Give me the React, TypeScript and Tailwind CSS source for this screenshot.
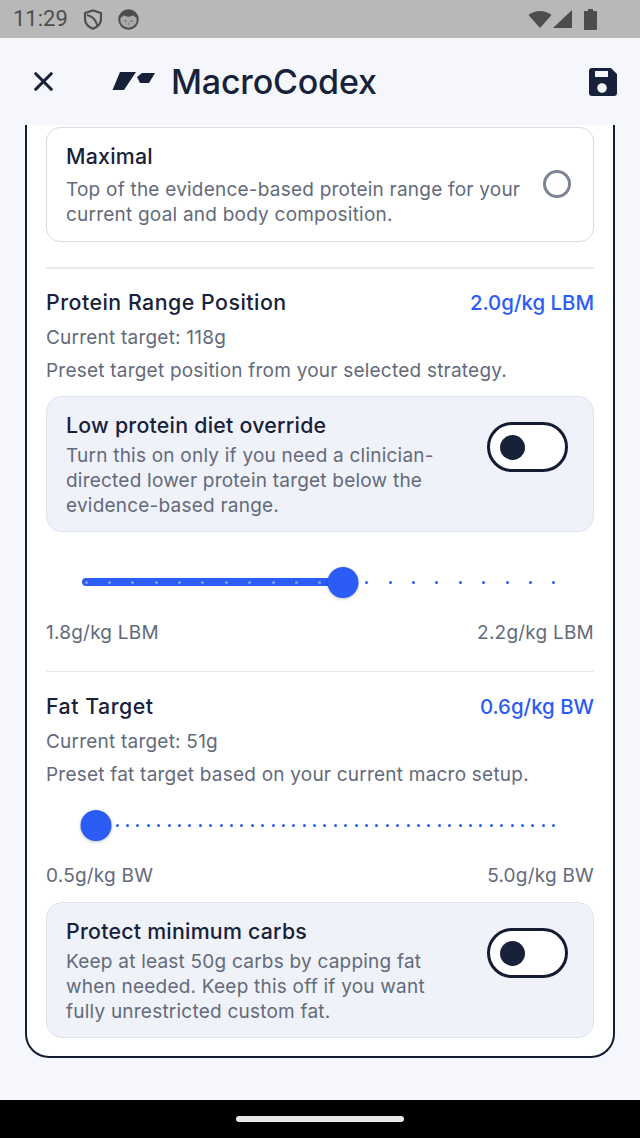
import React from "react";
import { X } from "lucide-react";

function Slider({ steps, value }: { steps: number; value: number }) {
  const dots = Array.from({ length: steps + 1 }, (_, i) => i);
  const pct = (value / steps) * 100;
  return (
    <div className="relative mx-[40px] h-[32px]">
      <div className="absolute left-[-4px] top-[12px] h-[8px] rounded-full bg-[#2b5cf6]" style={{ width: `calc(${pct}% + 4px)` }} />
      <div className="absolute inset-x-0 top-[14.5px] flex justify-between">
        {dots.map((d) => (
          <span key={d} className={`-mx-[1.5px] h-[3px] w-[3px] rounded-full ${d < value ? "bg-[#7f9dfa]" : "bg-[#2b5cf6]"}`} />
        ))}
      </div>
      <div
        className="absolute top-[1px] h-[31px] w-[31px] -translate-x-1/2 rounded-full bg-[#2b5cf6] shadow-[0_1px_3px_rgba(0,0,0,0.25)]"
        style={{ left: `${pct}%` }}
      />
    </div>
  );
}

function Toggle() {
  return (
    <div className="flex h-[50px] w-[81px] shrink-0 items-center rounded-full border-[3px] border-[#141c33] bg-white pl-[10px]">
      <div className="h-[25px] w-[25px] rounded-full bg-[#18213a]" />
    </div>
  );
}

const body = "text-[19px] tracking-[0.22px] text-[#636a7b]";

function Notice({ title, lines }: { title: string; lines: string[] }) {
  return (
    <div className="flex h-[136px] items-start justify-between rounded-[16px] border border-[#dfe3ee] bg-[#eff2f9] pl-[19px] pr-[25px] pt-[14px]">
      <div>
        <div className="text-[21.33px] font-medium leading-[28px] tracking-[0.24px] text-[#18213a]">{title}</div>
        <div className={`mt-[4px] leading-[25px] ${body}`}>
          {lines.map((l) => (
            <div key={l}>{l}</div>
          ))}
        </div>
      </div>
      <div className="mt-[11px]">
        <Toggle />
      </div>
    </div>
  );
}

function Section({ title, value, target, hint }: { title: string; value: string; target: string; hint: string }) {
  return (
    <>
      <div className="flex h-[28px] items-start justify-between">
        <span className="text-[21.33px] font-medium leading-[28px] tracking-[0.5px] text-[#18213a]">{title}</span>
        <span className="mt-[1px] text-[20.4px] font-medium leading-[28px] text-[#2b5cf6]">{value}</span>
      </div>
      <div className={`mt-[9px] leading-[26px] ${body}`}>{target}</div>
      <div className={`mt-[7px] leading-[26px] ${body}`}>{hint}</div>
    </>
  );
}

function RangeLabels({ a, b }: { a: string; b: string }) {
  return (
    <div className={`flex justify-between leading-[26px] ${body}`}>
      <span>{a}</span>
      <span>{b}</span>
    </div>
  );
}

export default function App() {
  return (
    <div className="flex h-[1138px] w-[640px] flex-col overflow-hidden bg-[#f5f7fc] font-['Inter',sans-serif]">
      <div className="flex h-[38px] items-center bg-[#b8b8b8] pl-[13px] pr-[43px] text-[#4d4d4d]">
        <span className="font-['Roboto',sans-serif] text-[22px] leading-none">11:29</span>
        <svg className="ml-[16px]" width="18" height="21" viewBox="0 0 18 21" fill="none" stroke="#4d4d4d" strokeWidth="2.2">
          <path d="M9 1.5 L17 4 V10 C17 14.5 13.5 18 9 19.8 C4.5 18 1 14.5 1 10 V4 Z" />
          <path d="M3 6 C8 7 12 11 13.5 17" strokeWidth="1.8" />
        </svg>
        <svg className="ml-[16px]" width="21" height="21" viewBox="0 0 21 21">
          <circle cx="10.5" cy="10.5" r="9.3" fill="#a8a8a8" stroke="#4d4d4d" strokeWidth="2" />
          <path d="M2 9 C3 3 7 1 10.5 1 C14 1 18 3 19 9 C17 8 16 6.5 15 6.5 C12 8 9 8 6 6.5 C5 6.5 4 8 2 9 Z" fill="#4d4d4d" />
          <circle cx="7.5" cy="12" r="0.9" fill="#6a6a6a" />
          <circle cx="13.5" cy="12" r="0.9" fill="#6a6a6a" />
          <circle cx="10.5" cy="15" r="0.8" fill="#6a6a6a" />
        </svg>
        <div className="flex-1" />
        <svg width="24" height="20" viewBox="0 0 24 20">
          <path d="M0.5 6 C7 0.5 17 0.5 23.5 6 L12 19 Z" fill="#4d4d4d" />
        </svg>
        <svg className="ml-[1px]" width="20" height="20" viewBox="0 0 20 20">
          <path d="M0 19 L19 1 V19 Z" fill="#4d4d4d" />
        </svg>
        <svg className="ml-[11px]" width="13" height="21" viewBox="0 0 13 21">
          <path d="M4 0 H9 V2 H12 A1 1 0 0 1 13 3 V20 A1 1 0 0 1 12 21 H1 A1 1 0 0 1 0 20 V3 A1 1 0 0 1 1 2 H4 Z" fill="#4d4d4d" />
        </svg>
      </div>

      <div className="flex h-[87px] items-center pl-[28px] pr-[23px]">
        <X size={31} strokeWidth={2.4} className="text-[#18213a]" />
        <svg className="ml-[53px]" width="44" height="19" viewBox="0 0 44 19">
          <path d="M8 0 H24 L12 18 H0.5 Z" fill="#18213a" />
          <path d="M25 5 L30 1 H43 L37 11 H28 Z" fill="#18213a" />
        </svg>
        <span className="ml-[15px] text-[34px] font-medium leading-none tracking-[-0.2px] text-[#18213a]">MacroCodex</span>
        <div className="flex-1" />
        <svg width="28" height="28" viewBox="0 0 28 28">
          <path
            fillRule="evenodd"
            d="M3 0 H22 L28 6 V25 A3 3 0 0 1 25 28 H3 A3 3 0 0 1 0 25 V3 A3 3 0 0 1 3 0 Z M6 3 H19 V9 H6 Z M13 15.2 A4.8 4.8 0 1 0 13 24.8 A4.8 4.8 0 1 0 13 15.2 Z"
            fill="#18213a"
          />
        </svg>
      </div>

      <div className="mx-[25px] h-[933px] rounded-b-[24px] border-x-2 border-b-2 border-[#141c33] bg-white px-[19px] pt-[2px]">
        <div className="flex h-[115px] items-start justify-between rounded-[14px] border border-[#d9dde6] pl-[19px] pr-[22px] pt-[14px]">
          <div>
            <div className="text-[21.33px] font-medium leading-[28px] tracking-[0.24px] text-[#18213a]">Maximal</div>
            <div className={`mt-[7px] leading-[25px] ${body}`}>
              <div>Top of the evidence-based protein range for your</div>
              <div>current goal and body composition.</div>
            </div>
          </div>
          <div className="mt-[28px] h-[28px] w-[28px] rounded-full border-[3px] border-[#7d8493]" />
        </div>

        <div className="mt-[25px] h-[2px] bg-[#e6e9ef]" />

        <div className="mt-[19px]">
          <Section
            title="Protein Range Position"
            value="2.0g/kg LBM"
            target="Current target: 118g"
            hint="Preset target position from your selected strategy."
          />
        </div>
        <div className="mt-[12px]">
          <Notice
            title="Low protein diet override"
            lines={["Turn this on only if you need a clinician-", "directed lower protein target below the", "evidence-based range."]}
          />
        </div>
        <div className="mt-[34px]">
          <Slider steps={20} value={11} />
        </div>
        <div className="mt-[22px]">
          <RangeLabels a="1.8g/kg LBM" b="2.2g/kg LBM" />
        </div>

        <div className="mt-[25px] h-px bg-[#e6e9ef]" />

        <div className="mt-[20px]">
          <Section
            title="Fat Target"
            value="0.6g/kg BW"
            target="Current target: 51g"
            hint="Preset fat target based on your current macro setup."
          />
        </div>
        <div className="mt-[21px]">
          <Slider steps={45} value={1} />
        </div>
        <div className="mt-[22px]">
          <RangeLabels a="0.5g/kg BW" b="5.0g/kg BW" />
        </div>
        <div className="mt-[13px]">
          <Notice
            title="Protect minimum carbs"
            lines={["Keep at least 50g carbs by capping fat", "when needed. Keep this off if you want", "fully unrestricted custom fat."]}
          />
        </div>
      </div>

      <div className="flex-1" />
      <div className="flex h-[38px] items-center justify-center bg-black pb-[1px]">
        <div className="h-[6px] w-[168px] rounded-full bg-[#e8e8e8]" />
      </div>
    </div>
  );
}
